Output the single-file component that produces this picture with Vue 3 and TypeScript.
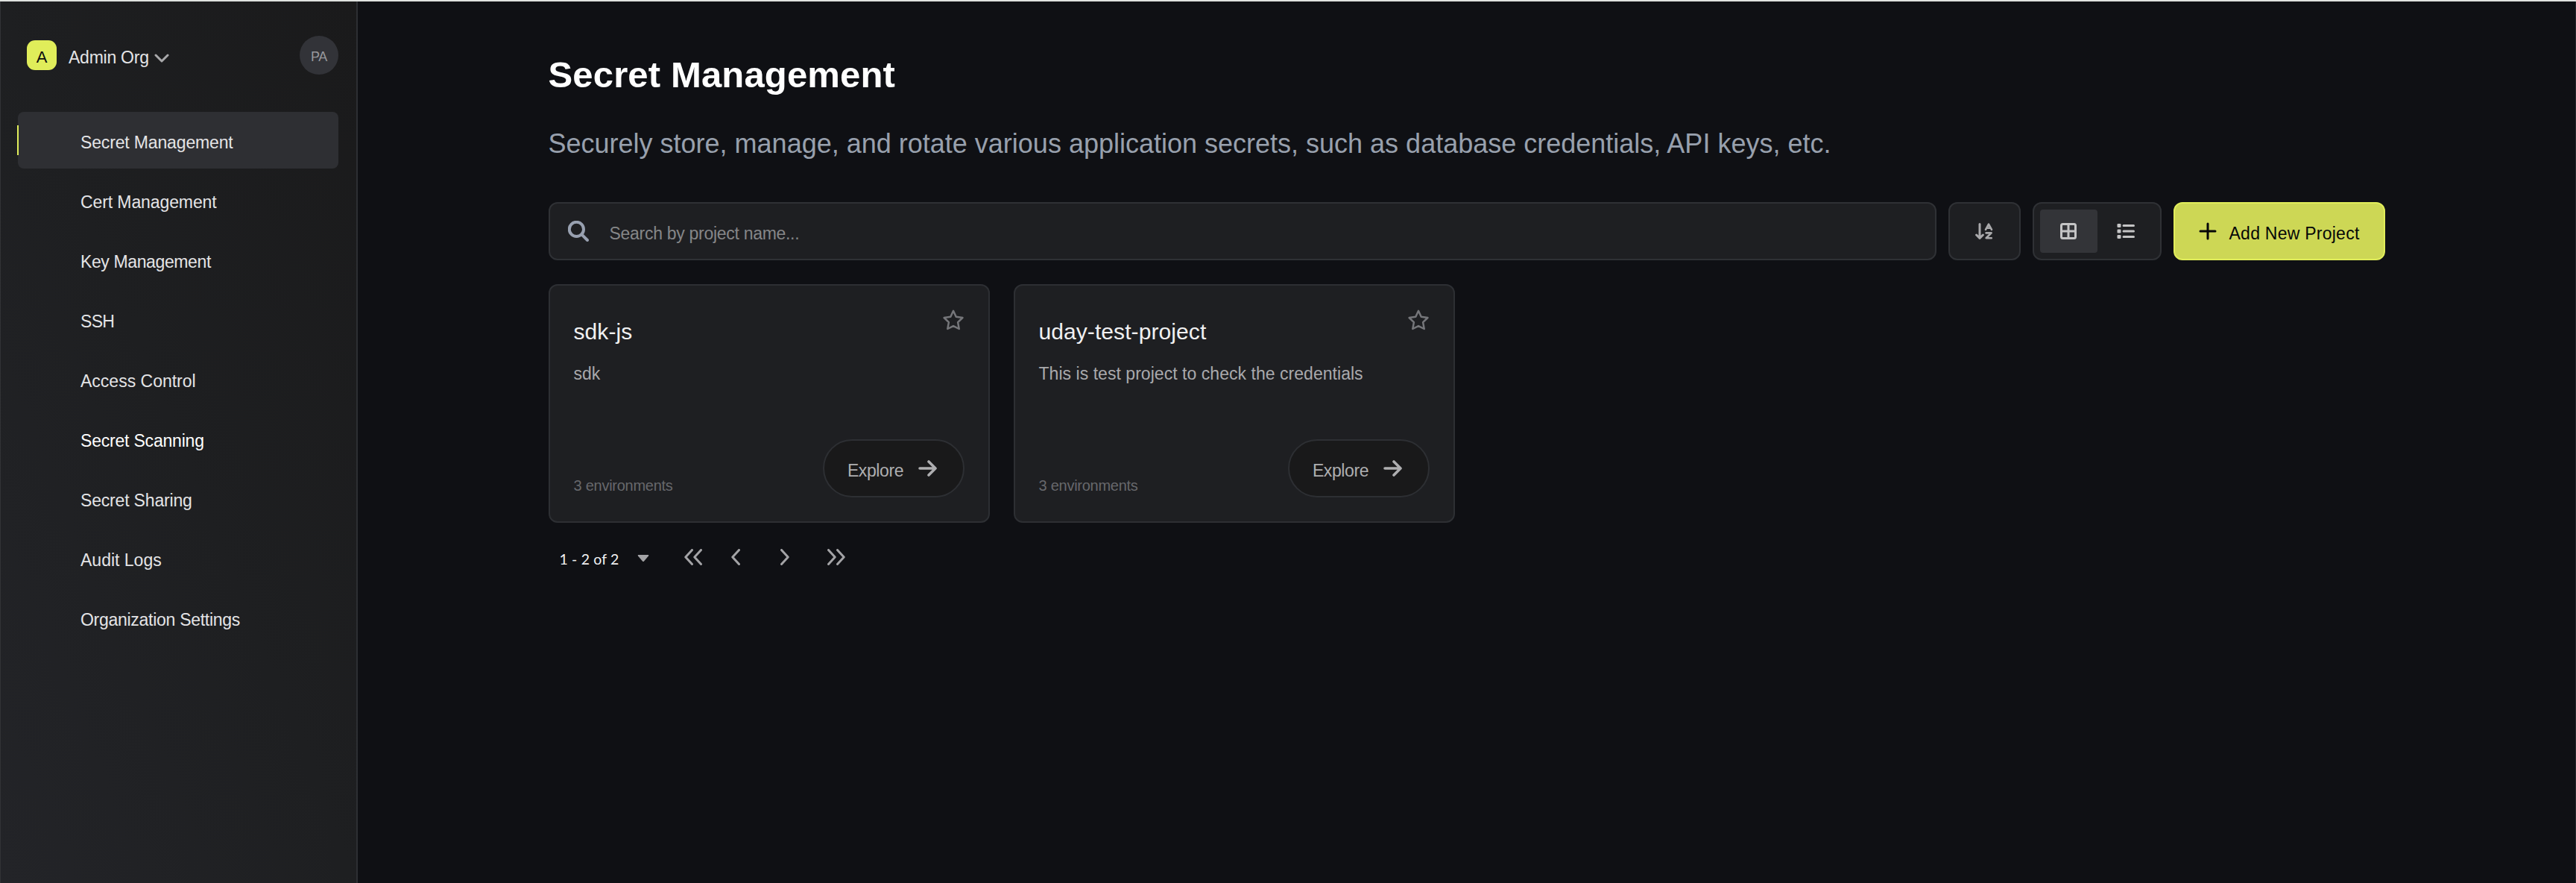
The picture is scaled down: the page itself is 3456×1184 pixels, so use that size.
<script setup lang="ts">
import { ref } from 'vue'

interface NavItem {
  label: string
  tracking: number
  bright?: boolean
}

interface Project {
  name: string
  description: string
  environments: number
}

const navItems: NavItem[] = [
  { label: 'Secret Management', tracking: -0.15 },
  { label: 'Cert Management', tracking: -0.1 },
  { label: 'Key Management', tracking: -0.38 },
  { label: 'SSH', tracking: -0.7 },
  { label: 'Access Control', tracking: 0 },
  { label: 'Secret Scanning', tracking: -0.2, bright: true },
  { label: 'Secret Sharing', tracking: -0.18 },
  { label: 'Audit Logs', tracking: 0 },
  { label: 'Organization Settings', tracking: -0.28 },
]

const projects: Project[] = [
  { name: 'sdk-js', description: 'sdk', environments: 3 },
  {
    name: 'uday-test-project',
    description: 'This is test project to check the credentials',
    environments: 3,
  },
]

const active = ref(0)
const view = ref<'grid' | 'list'>('grid')
</script>

<template>
  <div class="app">
    <aside class="sidebar">
      <header class="org">
        <span class="org-logo"><span>A</span></span>
        <span class="org-name">Admin Org</span>
        <svg class="org-chevron" width="20" height="12" viewBox="0 0 20 12">
          <path d="M2 2l8 8 8-8" />
        </svg>
        <span class="avatar"><span>PA</span></span>
      </header>
      <nav class="nav">
        <a
          v-for="(item, i) in navItems"
          :key="item.label"
          class="nav-item"
          :class="{ active: i === active, bright: item.bright }"
          @click="active = i"
        >
          <span :style="{ letterSpacing: item.tracking + 'px' }">{{ item.label }}</span>
        </a>
      </nav>
    </aside>

    <main class="main">
      <div class="content">
        <h1 class="title">Secret Management</h1>
        <p class="subtitle">
          Securely store, manage, and rotate various application secrets, such as database credentials, API keys, etc.
        </p>

        <div class="toolbar">
          <label class="search">
            <svg width="28" height="28" viewBox="0 0 28 28">
              <circle cx="11.4" cy="11.4" r="9.6" />
              <path d="M18.4 18.4l7.6 7.6" />
            </svg>
            <span class="placeholder">Search by project name...</span>
          </label>

          <button class="sort" aria-label="Sort">
            <svg width="24" height="22" viewBox="0 0 24 22">
              <path d="M6 1.6v18.6M1.6 16L6 20.4l4.400-4.400" />
              <path d="M14 8.800l4-7.200 4 7.200M15.200 6.800h5.600" stroke-width="2.600" />
              <path d="M14.600 13.400h7l-7 6.800h7.200" stroke-width="2.600" />
            </svg>
          </button>

          <div class="views">
            <button class="view grid" :class="{ on: view === 'grid' }" aria-label="Grid view" @click="view = 'grid'">
              <svg width="22" height="22" viewBox="0 0 22 22">
                <rect x="1.500" y="1.500" width="19" height="19" rx="2" />
                <path d="M11 2v18M2 11h18" />
              </svg>
            </button>
            <button class="view list" :class="{ on: view === 'list' }" aria-label="List view" @click="view = 'list'">
              <svg width="24" height="20" viewBox="0 0 24 20">
                <path d="M9 2.500h13.500M9 10h13.500M9 17.500h13.500" />
                <g class="dots">
                  <rect x="0.500" y="0" width="5" height="5" rx="1.200" />
                  <rect x="0.500" y="7.500" width="5" height="5" rx="1.200" />
                  <rect x="0.500" y="15" width="5" height="5" rx="1.200" />
                </g>
              </svg>
            </button>
          </div>

          <button class="add">
            <svg width="24" height="24" viewBox="0 0 24 24">
              <path d="M12 2v20M2 12h20" />
            </svg>
            <span>Add New Project</span>
          </button>
        </div>

        <div class="cards">
          <article v-for="project in projects" :key="project.name" class="card">
            <div class="card-head">
              <h2>{{ project.name }}</h2>
              <svg class="star" width="28" height="28" viewBox="0 0 28 28">
                <path d="M14 1.800l3.700 8 8.700 1.200-6.300 6.100 1.600 8.900L14 22.100 6.300 26l1.600-8.900L1.600 11l8.700-1.200z" />
              </svg>
            </div>
            <p class="description">{{ project.description }}</p>
            <div class="card-foot">
              <span class="envs">{{ project.environments }} environments</span>
              <button class="explore">
                <span>Explore</span>
                <svg width="26" height="22" viewBox="0 0 26 22">
                  <path d="M2 11h21M14 2l9 9-9 9" />
                </svg>
              </button>
            </div>
          </article>
        </div>

        <footer class="pager">
          <span class="range">1 - 2 of 2</span>
          <svg class="caret" width="16" height="10" viewBox="0 0 16 10">
            <path d="M1.600 0h12.800q1.500 0 .6 1.400L9 8.600q-1 1-2 0L1 1.400Q.1 0 1.600 0z" />
          </svg>
          <svg class="arrow first" width="24" height="22" viewBox="0 0 24 22">
            <path d="M10.500 1.500L1.800 11l8.700 9.500M22.500 1.500L13.800 11l8.700 9.500" />
          </svg>
          <svg class="arrow prev" width="12" height="22" viewBox="0 0 12 22">
            <path d="M10.500 1.500L1.800 11l8.700 9.500" />
          </svg>
          <svg class="arrow next" width="12" height="22" viewBox="0 0 12 22">
            <path d="M1.500 1.500l8.700 9.500-8.700 9.500" />
          </svg>
          <svg class="arrow last" width="24" height="22" viewBox="0 0 24 22">
            <path d="M1.500 1.500l8.700 9.500-8.700 9.500M13.500 1.500l8.700 9.500-8.700 9.500" />
          </svg>
        </footer>
      </div>
    </main>
  </div>
</template>

<style>
body {
  background: #0f1014;
}
</style>

<style scoped>
.app {
  box-sizing: border-box;
  display: flex;
  width: 3456px;
  height: 1184px;
  border-top: 2px solid #dfe2df;
  background: #0f1014;
  font-family: "Liberation Sans", Arial, sans-serif;
  font-size: 23px;
  color: #e4e4e6;
  overflow: hidden;
}

.app *,
.app *::before {
  box-sizing: border-box;
}

button {
  margin: 0;
  padding: 0;
  font: inherit;
  color: inherit;
}

svg {
  display: block;
  flex: none;
  fill: none;
  stroke: currentColor;
  stroke-width: 3;
  stroke-linecap: round;
  stroke-linejoin: round;
}

/* Sidebar */
.sidebar {
  flex: none;
  width: 480px;
  padding: 46px 24px 0 23px;
  border-left: 1px solid #323336;
  border-right: 2px solid #2d2f33;
  background: linear-gradient(to top right, #232428 0%, #1e1f21 50%, #1a1a1b 100%);
}

.org {
  display: flex;
  align-items: center;
  height: 52px;
  padding-left: 12px;
}

.org-logo {
  display: flex;
  align-items: center;
  justify-content: center;
  width: 40px;
  height: 40px;
  border-radius: 11px;
  background: #e0ed5a;
  color: #0d0e10;
  font-size: 22px;
}

.org-logo span {
  padding-top: 6px;
}

.org-name {
  margin-left: 16px;
  padding-top: 6px;
  letter-spacing: -0.250px;
  white-space: nowrap;
}

.org-chevron {
  margin: 8px 0 0 7px;
  color: #a9a9ab;
}

.avatar {
  display: flex;
  align-items: center;
  justify-content: center;
  width: 52px;
  height: 52px;
  margin-left: auto;
  border-radius: 50%;
  background: #323338;
  color: #98989c;
  font-size: 18px;
  letter-spacing: -0.300px;
}

.avatar span {
  padding-top: 4px;
}

.nav {
  display: flex;
  flex-direction: column;
  gap: 4px;
  margin-top: 50px;
}

.nav-item {
  position: relative;
  display: flex;
  align-items: center;
  height: 76px;
  padding: 6px 0 0 84px;
  border-radius: 8px;
  white-space: nowrap;
}

.nav-item.bright {
  color: #fff;
}

.nav-item.active {
  background: #2e2f33;
}

.nav-item.active::before {
  content: "";
  position: absolute;
  left: -1px;
  top: 18px;
  width: 2px;
  height: 40px;
  background: #e0ed5a;
}

/* Main column */
.main {
  flex: 1;
  display: flex;
  justify-content: center;
  border-right: 1px solid #26272b;
}

.content {
  width: 2464px;
  padding-top: 68px;
}

.title {
  margin: 0;
  font-size: 49px;
  line-height: 60px;
  font-weight: 700;
  letter-spacing: 0.150px;
  color: #fff;
}

.subtitle {
  margin: 38px 0 0;
  font-size: 36px;
  line-height: 50px;
  letter-spacing: 0;
  white-space: nowrap;
  color: #98a0ad;
}

.toolbar {
  display: flex;
  height: 78px;
  margin-top: 53px;
}

.search,
.sort,
.views {
  display: flex;
  align-items: center;
  border: 2px solid #2f3135;
  border-radius: 12px;
  background: #1e1f22;
}

.search {
  width: 1862px;
  padding-left: 24px;
}

.search svg {
  stroke-width: 4;
  color: #98a0b0;
}

.placeholder {
  margin-left: 28px;
  padding-top: 6px;
  letter-spacing: -0.290px;
  color: #858688;
}

.sort {
  justify-content: center;
  width: 97px;
  margin-left: 16px;
  color: #a9a9ab;
}

.views {
  width: 173px;
  margin-left: 16px;
  padding: 0 8px;
  color: #c4c4c5;
}

.view {
  flex: none;
  display: flex;
  align-items: center;
  justify-content: center;
  width: 77px;
  height: 58px;
  border: 0;
  border-radius: 4px;
  background: transparent;
}

.view.on {
  background: #333438;
}

.dots {
  fill: currentColor;
  stroke: none;
}

.add {
  display: flex;
  align-items: center;
  width: 284px;
  margin-left: 16px;
  padding-left: 32px;
  border: 2px solid #e0ed5a;
  border-radius: 12px;
  background: #cdd755;
  color: #060708;
}

.add span {
  margin-left: 17px;
  padding-top: 6px;
  letter-spacing: 0.250px;
  white-space: nowrap;
}

/* Project cards */
.cards {
  display: grid;
  grid-template-columns: repeat(4, 1fr);
  gap: 32px;
  margin-top: 32px;
}

.card {
  display: flex;
  flex-direction: column;
  height: 320px;
  padding: 32px;
  border: 2px solid #2d2f33;
  border-radius: 12px;
  background: #1e1f22;
}

.card-head {
  display: flex;
  justify-content: space-between;
}

.card h2 {
  margin: 10px 0 0;
  font-size: 30px;
  line-height: 40px;
  font-weight: 400;
  letter-spacing: 0.080px;
  color: #f0f0f1;
}

.star {
  margin-right: 1px;
  stroke-width: 2.500;
  color: #75767a;
}

.description {
  margin: 21px 0 0;
  line-height: 30px;
  letter-spacing: 0.040px;
  color: #a9a9ac;
}

.card-foot {
  display: flex;
  align-items: flex-end;
  justify-content: space-between;
  margin-top: auto;
}

.envs {
  margin-bottom: 4px;
  font-size: 20px;
  line-height: 24px;
  letter-spacing: -0.260px;
  color: #67686c;
}

.explore {
  display: flex;
  align-items: center;
  width: 190px;
  height: 78px;
  padding-left: 31px;
  border: 2px solid #2d2f33;
  border-radius: 39px;
  background: #19191a;
  color: #aeaeb0;
}

.explore span {
  width: 76px;
  padding-top: 6px;
  letter-spacing: -0.400px;
}

.explore svg {
  margin-left: 19px;
  stroke-width: 3.600;
}

/* Pagination */
.pager {
  display: flex;
  align-items: center;
  height: 60px;
  margin-top: 16px;
  padding-left: 15px;
  color: #a3a3a6;
}

.range {
  width: 80px;
  padding-top: 4px;
  font-family: Lato, "Liberation Sans", sans-serif;
  font-size: 19.500px;
  letter-spacing: 0.150px;
  white-space: nowrap;
  color: #f2f2f3;
}

.caret {
  margin: 4px 0 0 24px;
  fill: currentColor;
  stroke: none;
}

.first {
  margin-left: 47px;
}

.prev {
  margin-left: 39px;
}

.next {
  margin-left: 54px;
}

.last {
  margin-left: 51px;
}
</style>
